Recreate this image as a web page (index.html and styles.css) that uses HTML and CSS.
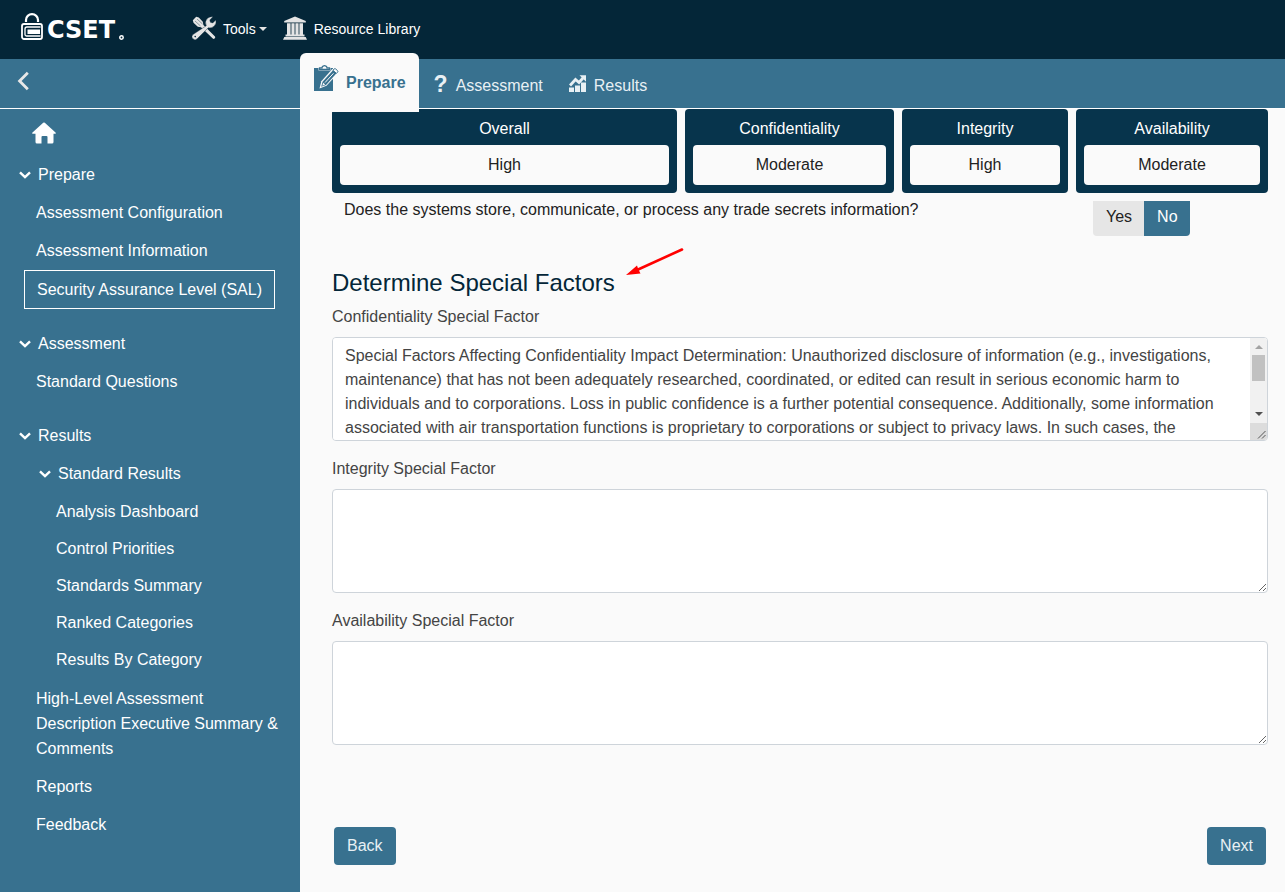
FILE: index.html
```html
<!DOCTYPE html>
<html lang="en">
<head>
<meta charset="utf-8">
<meta name="viewport" content="width=device-width, initial-scale=1">
<title>CSET - Security Assurance Level</title>
<link rel="stylesheet" href="styles.css">
</head>
<body>
<header class="topbar">
  <a class="brand" href="#home">
    <svg class="brand-lock" viewBox="0 0 22 27" aria-hidden="true">
      <path d="M5 9V7a6 5.800 0 0 1 12 0v2" fill="none" stroke="#fff" stroke-width="2.200"/>
      <rect x="1" y="11" width="20" height="15" rx="2" fill="none" stroke="#fff" stroke-width="1.800"/>
      <path d="M19.500 14H6a2 2 0 0 0-2 2v5.500a1.500 1.500 0 0 0 1.500 1.500h14" fill="none" stroke="#fff" stroke-width="1.300"/>
      <rect x="6.500" y="16.500" width="12.500" height="4.500" fill="#fff"/>
    </svg>
    <span>CSET</span>
    <svg class="brand-dot" viewBox="0 0 5 5" aria-hidden="true"><circle cx="2.500" cy="2.500" r="1.700" fill="none" stroke="#fff" stroke-width="1.500"/></svg>
  </a>
  <button class="menu-item tools" type="button">
    <svg class="menu-icon" viewBox="0 0 24 24" aria-hidden="true">
      <path d="M.8 4.200 4.200.8l2.600.7 4 4.200.6 3.300 11.600 11.400a1.600 1.600 0 0 1-2.200 2.200L9 11.300 5.800 10.800 1.500 6.800z" fill="#e4e4e4"/>
      <path d="m3 5 5.500 5M5 3l5.500 5" stroke="#042638" stroke-width=".4"/>
      <path d="M14.300 9.700a6.200 6.200 0 0 1 1.200-7.400A6.200 6.200 0 0 1 21 .8L17.800 4l.6 2.300 2.400.6 3-3a6.200 6.200 0 0 1-7.500 7.800L5.200 22.800a3 3 0 0 1-4.300-4.200z" fill="#e4e4e4" stroke="#042638" stroke-width=".4"/>
      <circle cx="3.200" cy="20.600" r=".8" fill="#042638"/>
    </svg>
    <span>Tools</span><span class="caret"></span>
  </button>
  <a class="menu-item" href="#library">
    <svg class="menu-icon" viewBox="0 0 24 24" aria-hidden="true" fill="#e4e4e4">
      <path d="M12 .5 22.800 5v1.500H1.200V5zM4 7.300h3.600V19H4zM8.400 7.300h3.200V19H8.400zM12.400 7.300h3.200V19h-3.200zM16.400 7.300H20V19h-3.600zM2.500 18.500h19v2h-19zM1.300 21h21.400l1.300 2.800H0z"/>
    </svg>
    <span>Resource Library</span>
  </a>
</header>

<div class="shell">
  <aside class="sidebar">
    <div class="sidebar-head">
      <button class="collapse" type="button" aria-label="Collapse navigation">
        <svg viewBox="0 0 12 20" aria-hidden="true"><path d="M10.800 1.800 2.600 10l8.200 8.200" fill="none" stroke="#e8e8e8" stroke-width="2.800"/></svg>
      </button>
    </div>
    <nav class="tree" aria-label="Assessment navigation">
      <a class="home" href="#home" aria-label="Home">
        <svg viewBox="0 0 24 22" aria-hidden="true"><path d="M12 .5a1 1 0 0 1 .8.3L23.500 10.500c.6.6.3 1.300-.5 1.300h-1.500V20a1.500 1.500 0 0 1-1.500 1.500h-4.500V15a1 1 0 0 0-1-1h-4a1 1 0 0 0-1 1v6.500H5A1.500 1.500 0 0 1 3.500 20v-8.200H1c-.8 0-1.100-.7-.5-1.300L11.200.8a1 1 0 0 1 .8-.3z" fill="#fff"/></svg>
      </a>
      <section class="group">
        <button class="node" type="button" aria-expanded="true"><svg class="chev" viewBox="0 0 12 8" aria-hidden="true"><path d="m1 1.300 5 4.700 5-4.700"/></svg>Prepare</button>
        <a class="leaf" href="#config">Assessment Configuration</a>
        <a class="leaf" href="#info">Assessment Information</a>
        <a class="leaf current" href="#sal" aria-current="page">Security Assurance Level (SAL)</a>
      </section>
      <section class="group">
        <button class="node" type="button" aria-expanded="true"><svg class="chev" viewBox="0 0 12 8" aria-hidden="true"><path d="m1 1.300 5 4.700 5-4.700"/></svg>Assessment</button>
        <a class="leaf" href="#questions">Standard Questions</a>
      </section>
      <section class="group">
        <button class="node" type="button" aria-expanded="true"><svg class="chev" viewBox="0 0 12 8" aria-hidden="true"><path d="m1 1.300 5 4.700 5-4.700"/></svg>Results</button>
        <button class="node nested" type="button" aria-expanded="true"><svg class="chev" viewBox="0 0 12 8" aria-hidden="true"><path d="m1 1.300 5 4.700 5-4.700"/></svg>Standard Results</button>
        <div class="subtree">
          <a class="leaf" href="#dashboard">Analysis Dashboard</a>
          <a class="leaf" href="#priorities">Control Priorities</a>
          <a class="leaf" href="#summary">Standards Summary</a>
          <a class="leaf" href="#ranked">Ranked Categories</a>
          <a class="leaf" href="#bycategory">Results By Category</a>
        </div>
        <div class="compact">
          <a class="leaf" href="#description">High-Level Assessment Description Executive Summary &amp; Comments</a>
          <a class="leaf" href="#reports">Reports</a>
          <a class="leaf" href="#feedback">Feedback</a>
        </div>
      </section>
    </nav>
  </aside>

  <div class="workspace">
    <nav class="tabs" aria-label="Sections">
      <a class="tab active" href="#prepare" aria-current="page">
        <svg class="clip-icon" viewBox="0 0 26 28" aria-hidden="true">
          <path d="M1 4h4.500v2.500h12V4H20v23H1z" fill="#38718f"/>
          <path d="M6.500 5.500V3.800H9a1.800 1.800 0 0 1 1-1.600 2.600 2.600 0 0 1 3 0 1.800 1.800 0 0 1 1 1.600h2.500v1.700z" fill="#fafafa" stroke="#38718f" stroke-width="1.300"/>
          <path d="M6.500 24.500 8.300 17.300 19.500 4.800 24.800 9.500 13.500 21.800z" fill="#fafafa"/>
          <path d="M8.200 22.800 9.600 17.800 20 6.300l3.500 3L13 21z" fill="#38718f"/>
          <path d="m9.300 21.700 1-3 1.900 1.700z" fill="#fafafa"/>
          <path d="M12 18.600 20.500 9.300" stroke="#fafafa" stroke-width="1"/>
          <path d="m20 6.300 1.200-1.400a1 1 0 0 1 1.400 0l2 1.800a1 1 0 0 1 0 1.400l-1.200 1.300z" fill="#fafafa" stroke="#38718f" stroke-width="1"/>
        </svg>
        <span>Prepare</span>
      </a>
      <a class="tab" href="#assessment"><b class="q-icon" aria-hidden="true">?</b><span>Assessment</span></a>
      <a class="tab results" href="#results">
        <svg class="chart-icon" viewBox="0 0 18 17" aria-hidden="true" fill="#e8f0f4">
          <path d="M0 12.500h5V17H0zM6 10.500h5V17H6zM12 7.500h5V17h-5z"/>
          <path d="M1 10.500 6.500 4.500l3.500 3 4-4.500" fill="none" stroke="#e8f0f4" stroke-width="2.800"/>
          <path d="M10.500.3H17v6.500z"/>
        </svg>
        <span>Results</span>
      </a>
    </nav>

    <main class="content">
      <div class="levels">
        <section class="level"><h2>Overall</h2><div>High</div></section>
        <section class="level"><h2>Confidentiality</h2><div>Moderate</div></section>
        <section class="level"><h2>Integrity</h2><div>High</div></section>
        <section class="level"><h2>Availability</h2><div>Moderate</div></section>
      </div>

      <div class="question">
        <p id="q-secrets">Does the systems store, communicate, or process any trade secrets information?</p>
        <div class="toggle" role="group" aria-labelledby="q-secrets">
          <button type="button" aria-pressed="false">Yes</button>
          <button class="on" type="button" aria-pressed="true">No</button>
        </div>
      </div>

      <h1 class="title">Determine Special Factors
        <svg class="pointer" viewBox="0 0 60 30" aria-hidden="true"><path d="M57 1.500 12 22" stroke="#f00" stroke-width="2.600" stroke-linecap="round"/><path d="M1 27 12 17.500l1.300 3.700 2.200 4.300z" fill="#f00"/></svg>
      </h1>

      <div class="field">
        <label for="conf">Confidentiality Special Factor</label>
        <div class="scrollbox">
          <textarea id="conf">Special Factors Affecting Confidentiality Impact Determination: Unauthorized disclosure of information (e.g., investigations, maintenance) that has not been adequately researched, coordinated, or edited can result in serious economic harm to individuals and to corporations. Loss in public confidence is a further potential consequence. Additionally, some information associated with air transportation functions is proprietary to corporations or subject to privacy laws. In such cases, the confidentiality impact level is normally at least moderate.</textarea>
          <div class="scrollbar" aria-hidden="true">
            <span class="arrow up"></span>
            <span class="thumb"></span>
            <span class="arrow down"></span>
            <svg class="grip" viewBox="0 0 17 17"><path d="m8 15.500 7.500-7.500M12 15.500l3.500-3.500" stroke="#555" stroke-width="1"/></svg>
          </div>
        </div>
      </div>
      <div class="field">
        <label for="integ">Integrity Special Factor</label>
        <textarea id="integ"></textarea>
      </div>
      <div class="field">
        <label for="avail">Availability Special Factor</label>
        <textarea id="avail"></textarea>
      </div>

      <div class="pager">
        <button type="button">Back</button>
        <button type="button">Next</button>
      </div>
    </main>
  </div>
</div>
</body>
</html>
```

FILE: styles.css
```css
* { box-sizing: border-box; }

body {
  margin: 0;
  min-height: 100vh;
  display: flex;
  flex-direction: column;
  background: #fafafa;
  color: #222;
  font: 16px/24px "Liberation Sans", Arial, sans-serif;
}

a { color: inherit; text-decoration: none; }
button { font: inherit; color: inherit; border: 0; background: none; padding: 0; cursor: pointer; }
svg { display: block; flex: none; }
h1, h2, p { margin: 0; font-weight: 400; }

/* Top bar */
.topbar {
  display: flex;
  align-items: center;
  height: 59px;
  padding: 0 21px 2px;
  background: #042638;
  color: #fff;
  font-size: 14px;
}
.brand {
  display: flex;
  align-items: flex-end;
  width: 171px;
  gap: 4px;
  height: 27px;
  margin-bottom: 4px;
  font: bold 24px/20px "DejaVu Sans", sans-serif;
}
.brand-lock { width: 22px; height: 27px; }
.brand-dot { width: 5px; height: 5px; }
.menu-item { display: flex; align-items: center; gap: 7px; }
.menu-icon { width: 24px; height: 24px; margin-bottom: 2px; }
.tools { margin-right: 16px; }
.caret {
  margin-left: -4px;
  border: 4px solid transparent;
  border-top-color: #e4e4e4;
  border-bottom: 0;
}

/* Sidebar */
.shell { flex: 1; display: flex; }
.sidebar { flex: 0 0 300px; background: #38718f; color: #fff; }
.sidebar-head {
  display: flex;
  align-items: center;
  height: 50px;
  padding: 0 17px 6px;
  border-bottom: 1px solid #fff;
}
.collapse svg { width: 12px; height: 20px; }
.tree { padding: 13px 20px 24px 18px; line-height: 26px; }
.home { display: block; width: 24px; margin: 0 0 12px 14px; }
.home svg { width: 24px; height: 22px; }
.group { margin-bottom: 16px; }
.node {
  display: flex;
  align-items: center;
  gap: 7px;
  width: 100%;
  padding: 6px 0 6px 1px;
}
.node.nested { padding-left: 21px; }
.chev { width: 12px; height: 8px; fill: none; stroke: #fff; stroke-width: 2.4; }
.leaf { display: block; padding: 6px 0 6px 18px; }
.leaf.current {
  width: max-content;
  margin-left: 6px;
  padding: 6px 12px 5px;
  border: 1px solid #fff;
}
.subtree, .compact { line-height: 25px; }
.subtree { padding: 0 0 2px 20px; }
.compact { display: grid; gap: 1px; }

/* Tabs */
.workspace { flex: 1; min-width: 0; }
.tabs {
  display: flex;
  height: 50px;
  background: #38718f;
  border-bottom: 1px solid #fff;
  color: #e8f0f4;
}
.tab { display: flex; align-items: center; gap: 8px; padding: 4px 0 0 15px; }
.tab.active {
  z-index: 1;
  gap: 7px;
  margin: -6px 0 -4px;
  padding: 0 13px;
  border-radius: 6px 6px 0 0;
  background: #fafafa;
  color: #38718f;
  font-weight: 700;
}
.tab.results { padding-left: 26px; gap: 7px; }
.clip-icon { width: 26px; height: 28px; margin-bottom: 9px; }
.q-icon { margin-bottom: 4px; font-size: 23px; }
.chart-icon { width: 18px; height: 17px; margin-bottom: 4px; }

/* Content */
.content { padding: 0 17px 27px 32px; }
.levels { display: grid; grid-template-columns: 345fr 209fr 166fr 192fr; gap: 8px; }
.level {
  padding: 8px;
  border-radius: 4px;
  background: #07344c;
  text-align: center;
}
.level h2 { margin-bottom: 4px; color: #fff; font-size: 16px; line-height: 24px; }
.level div { padding: 8px; border-radius: 4px; background: #fafafa; }

.question {
  display: grid;
  grid-template-columns: 1fr 175px;
  align-items: start;
  padding: 5px 0 0 12px;
}
.toggle { display: flex; margin-top: 3px; }
.toggle button {
  height: 35px;
  padding: 0 12px 4px 13px;
  background: #e6e6e6;
  border-radius: 0 0 0 4px;
}
.toggle .on { background: #38718f; color: #fff; border-radius: 0 0 4px 0; }

.title {
  position: relative;
  width: max-content;
  margin: 32px 0 7px;
  color: #042638;
  font-size: 24px;
  line-height: 30px;
}
.pointer {
  position: absolute;
  left: 100%;
  top: -20px;
  width: 60px;
  height: 30px;
  margin-left: 10px;
}

.field { margin-bottom: 16px; color: #444; }
.field label { display: block; margin-bottom: 8px; }
.field textarea {
  display: block;
  width: 100%;
  height: 104px;
  padding: 6px 12px;
  border: 1px solid #ced4da;
  border-radius: 4px;
  background: #fff;
  color: #444;
  font: inherit;
  resize: vertical;
}

/* Text box with a permanently visible scrollbar */
.scrollbox { position: relative; }
.field .scrollbox textarea { padding-right: 29px; scrollbar-width: none; }
.scrollbar {
  position: absolute;
  inset: 1px 1px 1px auto;
  display: flex;
  flex-direction: column;
  align-items: center;
  width: 17px;
  border-radius: 0 3px 3px 0;
  overflow: hidden;
  background: #f1f1f1;
  pointer-events: none;
}
.arrow { border: 4px solid transparent; }
.arrow.up { margin-top: 7px; border-top: 0; border-bottom-color: #a3a3a3; }
.thumb { width: 13px; height: 26px; margin-top: 6px; background: #c1c1c1; }
.arrow.down { margin: auto 0 7px; border-bottom: 0; border-top-color: #505050; }
.grip { width: 17px; height: 17px; background: #dcdcdc; }

.pager { display: flex; justify-content: space-between; padding: 66px 2px 0; }
.pager button {
  height: 38px;
  padding: 0 13px;
  border-radius: 4px;
  background: #38718f;
  color: #e8f0f4;
}
```
